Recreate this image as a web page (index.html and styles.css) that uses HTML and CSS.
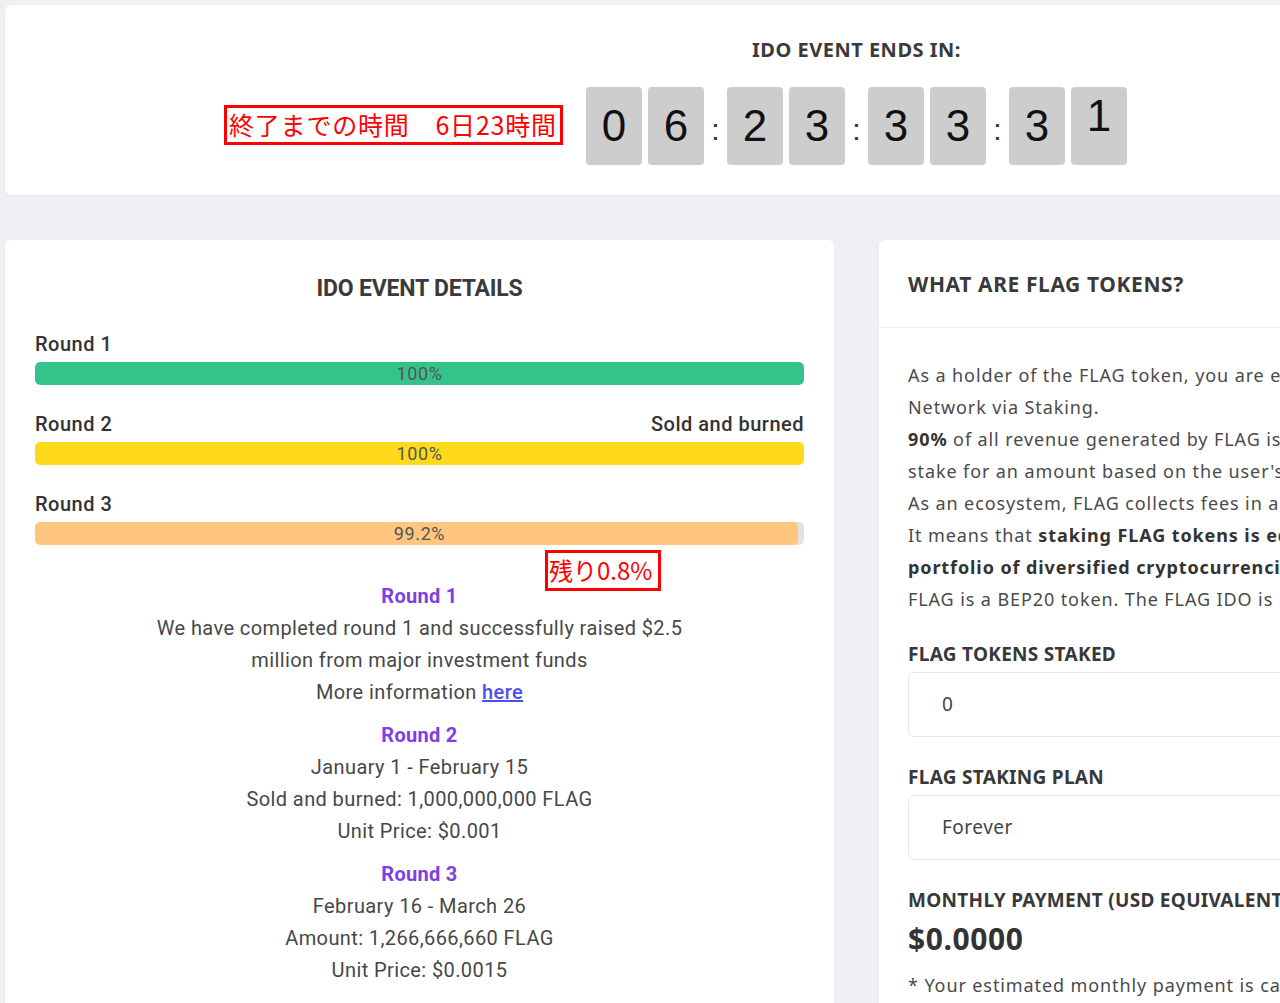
FILE: index.html
```html
<!DOCTYPE html>
<html lang="en">
<head>
  <meta charset="UTF-8">
  <meta name="viewport" content="width=device-width, initial-scale=1.0">
  <title>FLAG IDO</title>
  <link rel="stylesheet" href="styles.css">
</head>
<body>
  <div class="page">

    <!-- countdown -->
    <div class="card top-card">
      <h3 class="ends-title">IDO EVENT ENDS IN:</h3>
      <div class="countdown">
        <span class="digit">0</span><span class="digit">6</span>
        <span class="colon">:</span>
        <span class="digit">2</span><span class="digit">3</span>
        <span class="colon">:</span>
        <span class="digit">3</span><span class="digit">3</span>
        <span class="colon">:</span>
        <span class="digit">3</span><span class="digit flip">1</span>
      </div>
      <div class="note note-time">終了までの時間　6日23時間</div>
    </div>

    <div class="columns">
      <!-- left: event details -->
      <div class="card details">
        <h3 class="details-title">IDO EVENT DETAILS</h3>

        <div class="round">
          <div class="round-head"><span>Round 1</span></div>
          <div class="bar"><div class="fill green" style="width:100%"></div><span>100%</span></div>
        </div>
        <div class="round">
          <div class="round-head"><span>Round 2</span><span>Sold and burned</span></div>
          <div class="bar"><div class="fill yellow" style="width:100%"></div><span>100%</span></div>
        </div>
        <div class="round">
          <div class="round-head"><span>Round 3</span></div>
          <div class="bar"><div class="fill orange" style="width:99.2%"></div><span>99.2%</span></div>
        </div>

        <div class="note note-left">残り0.8%</div>

        <div class="info">
          <h4>Round 1</h4>
          <p>We have completed round 1 and successfully raised $2.5<br>million from major investment funds</p>
          <p>More information <a href="#">here</a></p>
        </div>
        <div class="info">
          <h4>Round 2</h4>
          <p>January 1 - February 15</p>
          <p>Sold and burned: 1,000,000,000 FLAG</p>
          <p>Unit Price: $0.001</p>
        </div>
        <div class="info">
          <h4>Round 3</h4>
          <p>February 16 - March 26</p>
          <p>Amount: 1,266,666,660 FLAG</p>
          <p>Unit Price: $0.0015</p>
        </div>
      </div>

      <!-- right: tokens -->
      <div class="card tokens">
        <div class="tokens-head">WHAT ARE FLAG TOKENS?</div>
        <div class="tokens-body">
          <p class="about">
            As a holder of the FLAG token, you are entitled to a share of the revenue generated by the FLAG<br>
            Network via Staking.<br>
            <b>90%</b> of all revenue generated by FLAG is distributed to users who have FLAG tokens in<br>
            stake for an amount based on the user's staked tokens.<br>
            As an ecosystem, FLAG collects fees in a variety of cryptocurrencies.<br>
            It means that <b>staking FLAG tokens is equivalent to owning a</b><br>
            <b>portfolio of diversified cryptocurrencies</b>.<br>
            FLAG is a BEP20 token. The FLAG IDO is held on the Binance Smart Chain.
          </p>

          <label class="field-label">FLAG TOKENS STAKED</label>
          <div class="field">0</div>

          <label class="field-label">FLAG STAKING PLAN</label>
          <div class="field">Forever</div>

          <label class="field-label">MONTHLY PAYMENT (USD EQUIVALENT, ESTIMATED)</label>
          <div class="payment">$0.0000</div>
          <p class="footnote">* Your estimated monthly payment is calculated based on the current revenue.</p>
        </div>
      </div>
    </div>

  </div>
</body>
</html>
```

FILE: styles.css
```css
html, body {
  margin: 0;
  padding: 0;
  overflow: hidden;
  background-color: #eef0f4;
}
body {
  font-family: Roboto, "Noto Sans", sans-serif;
  color: #444;
}
.page {
  width: 1703px;
  padding: 5px 0 0 5px;
}
.card {
  background-color: #fff;
  border-radius: 6px;
  box-shadow: 0 1px 3px rgba(0, 0, 0, 0.04);
  position: relative;
}

/* Countdown */
.top-card {
  height: 190px;
  box-sizing: border-box;
  padding-top: 33px;
  text-align: center;
}
.ends-title {
  margin: 0 0 25px;
  font-family: "Noto Sans", sans-serif;
  font-size: 20px;
  line-height: 24px;
  font-weight: 700;
  letter-spacing: 0.5px;
  color: #3a3a3a;
}
.countdown {
  display: flex;
  justify-content: center;
  align-items: center;
  gap: 6px;
}
.digit {
  width: 56px;
  height: 78px;
  border-radius: 4px;
  background-color: #cdcdcd;
  font-family: "Liberation Sans", Arial, sans-serif;
  font-size: 44px;
  line-height: 78px;
  color: #111;
}
.digit.flip {
  line-height: 58px;
}
.colon {
  width: 11px;
  font-family: "Liberation Sans", Arial, sans-serif;
  font-size: 30px;
  color: #333;
  padding-top: 8px;
}

/* Red annotations */
.note {
  position: absolute;
  border: 3px solid #ff0000;
  background-color: #fff;
  color: #ff0000;
  font-family: "Noto Sans CJK JP", "Noto Sans", sans-serif;
  white-space: nowrap;
  box-sizing: border-box;
}
.note-time {
  left: 219px;
  top: 100px;
  width: 339px;
  height: 40px;
  font-size: 25px;
  line-height: 33px;
  letter-spacing: 0.8px;
  padding-left: 2px;
  text-align: left;
}
.note-left {
  left: 540px;
  top: 310px;
  width: 116px;
  height: 41px;
  font-size: 24px;
  line-height: 34px;
  padding-left: 1px;
}

.columns {
  display: grid;
  grid-template-columns: 829px 829px;
  gap: 45px;
  margin-top: 45px;
}

/* Event details */
.details {
  padding: 34px 30px 40px;
  min-height: 780px;
}
.details-title {
  margin: 0 0 28px;
  text-align: center;
  font-size: 23px;
  line-height: 30px;
  font-weight: 700;
  letter-spacing: -0.2px;
  color: #3a3a3a;
}
.round {
  margin-bottom: 27px;
}
.round-head {
  display: flex;
  justify-content: space-between;
  font-size: 20px;
  line-height: 24px;
  font-weight: 500;
  letter-spacing: 0.5px;
  color: #333;
  margin-bottom: 6px;
}
.bar {
  position: relative;
  height: 23px;
  border-radius: 5px;
  background-color: #e2e2e2;
  overflow: hidden;
}
.fill {
  height: 100%;
  border-radius: 5px;
}
.fill.green { background-color: #34c48b; }
.fill.yellow { background-color: #ffda1a; }
.fill.orange { background-color: #ffc680; }
.bar span {
  position: absolute;
  left: 0;
  right: 0;
  top: 0;
  text-align: center;
  font-size: 18px;
  line-height: 23px;
  color: #555;
  letter-spacing: 0.6px;
}

.info {
  text-align: center;
  margin-bottom: 11px;
}
.details .round + .note + .info {
  margin-top: 35px;
}
.info h4 {
  margin: 0;
  font-size: 20px;
  line-height: 32px;
  font-weight: 700;
  letter-spacing: 0.3px;
  color: #7d3ee6;
}
.info p {
  margin: 0;
  font-size: 20px;
  line-height: 32px;
  letter-spacing: 0.4px;
  color: #474747;
}
.info a {
  color: #4d4df2;
  font-weight: 500;
}

/* Tokens */
.tokens {
  font-family: "Noto Sans", sans-serif;
  min-height: 780px;
}
.tokens-head {
  padding: 31px 29px 0;
  height: 56px;
  border-bottom: 1px solid #eceef1;
  font-size: 21px;
  line-height: 26px;
  font-weight: 700;
  letter-spacing: 0.6px;
  color: #3a3a3a;
}
.tokens-body {
  padding: 31px 29px 0;
  white-space: nowrap;
  overflow: hidden;
}
.about {
  margin: 0 0 27px;
  font-size: 18px;
  line-height: 32px;
  letter-spacing: 0.9px;
  color: #4a4a4a;
}
.about b {
  color: #333;
}
.field-label {
  display: block;
  font-size: 19px;
  line-height: 24px;
  font-weight: 700;
  letter-spacing: 0.3px;
  color: #383838;
  margin-bottom: 6px;
}
.field {
  height: 65px;
  box-sizing: border-box;
  border: 1px solid #e6e8eb;
  border-radius: 6px;
  padding-left: 33px;
  font-size: 19px;
  line-height: 63px;
  letter-spacing: 0.5px;
  color: #444;
  margin-bottom: 28px;
}
.payment {
  font-size: 30px;
  line-height: 40px;
  font-weight: 700;
  letter-spacing: 0.6px;
  color: #333;
  margin-top: 7px;
}
.footnote {
  margin: 14px 0 0;
  font-size: 18px;
  line-height: 24px;
  letter-spacing: 0.9px;
  color: #4a4a4a;
}
```
